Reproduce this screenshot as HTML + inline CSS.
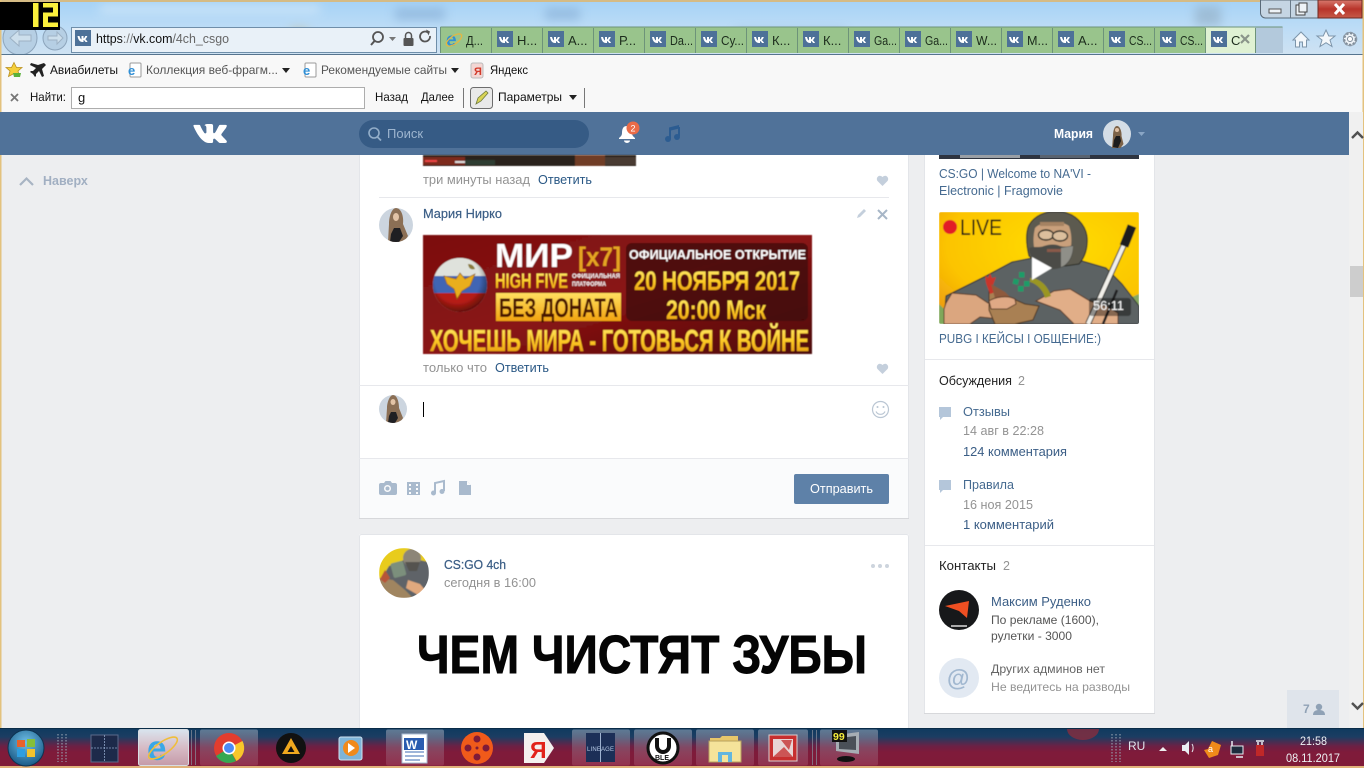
<!DOCTYPE html>
<html lang="ru"><head><meta charset="utf-8"><title>vk.com/4ch_csgo</title>
<style>
html,body{margin:0;padding:0;width:1364px;height:768px;overflow:hidden;background:#edeef0}
svg{display:block;position:absolute;left:0;top:0}
text{font-family:"Liberation Sans","Noto Sans CJK SC",sans-serif;white-space:pre}
.l{fill:#2a5885}.g{fill:#939393}.t{font-size:12.5px}.k{fill:#222}
.tab{font-size:13px;fill:#1c2c1c}
.tb{font-size:12px;fill:#111}
</style></head><body>
<svg width="1364" height="768" viewBox="0 0 1364 768" xmlns="http://www.w3.org/2000/svg">
<defs>
<linearGradient id="sky" x1="0" y1="0" x2="0" y2="1"><stop offset="0" stop-color="#a5d2f6"/><stop offset=".5" stop-color="#bcdcf6"/><stop offset="1" stop-color="#cfe2f2"/></linearGradient>
<linearGradient id="bar" x1="0" y1="0" x2="0" y2="1"><stop offset="0" stop-color="#0f3a5f"/><stop offset=".22" stop-color="#1b3d62"/><stop offset=".45" stop-color="#6a2145"/><stop offset=".6" stop-color="#7f1b3a"/><stop offset="1" stop-color="#7f1b38"/></linearGradient>
<linearGradient id="btn" x1="0" y1="0" x2="0" y2="1"><stop offset="0" stop-color="#7f96ac" stop-opacity=".7"/><stop offset=".5" stop-color="#8f6a80" stop-opacity=".55"/><stop offset="1" stop-color="#a0405c" stop-opacity=".6"/></linearGradient>
<linearGradient id="act" x1="0" y1="0" x2="0" y2="1"><stop offset="0" stop-color="#d8e4ee"/><stop offset=".5" stop-color="#d7bcc6"/><stop offset="1" stop-color="#c59aa8"/></linearGradient>
<linearGradient id="yel" x1="0" y1="0" x2="0" y2="1"><stop offset="0" stop-color="#fff27a"/><stop offset=".55" stop-color="#fdc823"/><stop offset="1" stop-color="#e08a0c"/></linearGradient>
<linearGradient id="ban" x1="0" y1="0" x2="1" y2="1"><stop offset="0" stop-color="#7c1010"/><stop offset=".5" stop-color="#8a1414"/><stop offset="1" stop-color="#4d0808"/></linearGradient>
<linearGradient id="box" x1="0" y1="0" x2="0" y2="1"><stop offset="0" stop-color="#ffe060"/><stop offset="1" stop-color="#f2a310"/></linearGradient>
<radialGradient id="gy" cx=".6" cy=".3" r=".8"><stop offset="0" stop-color="#ffdd00"/><stop offset=".7" stop-color="#fcc400"/><stop offset="1" stop-color="#ee9f10"/></radialGradient>
<linearGradient id="close" x1="0" y1="0" x2="0" y2="1"><stop offset="0" stop-color="#d87a6e"/><stop offset=".5" stop-color="#b8342a"/><stop offset="1" stop-color="#c65a48"/></linearGradient>
<radialGradient id="orb" cx=".5" cy=".35" r=".7"><stop offset="0" stop-color="#6fc0e8"/><stop offset="1" stop-color="#13527f"/></radialGradient>
<radialGradient id="glb" cx=".45" cy=".4" r=".6"><stop offset=".7" stop-color="#000" stop-opacity="0"/><stop offset="1" stop-color="#000" stop-opacity=".45"/></radialGradient>
<filter id="b8"><feGaussianBlur stdDeviation="5"/></filter>
<filter id="b1" x="-2%" y="-2%" width="104%" height="104%"><feGaussianBlur stdDeviation=".45"/></filter>
</defs>

<!-- page background -->
<rect width="1364" height="768" fill="#edeef0"/>

<!-- window chrome -->
<rect width="1364" height="55" fill="url(#sky)"/>
<g filter="url(#b8)" opacity=".55">
<rect x="395" y="8" width="50" height="12" fill="#7fa6cf"/><rect x="545" y="8" width="35" height="12" fill="#7fa6cf"/>
<rect x="290" y="28" width="18" height="14" fill="#c2b58a"/><rect x="1195" y="6" width="26" height="20" fill="#8ea8bd"/>
<rect x="735" y="30" width="110" height="10" fill="#8aa8c8"/><rect x="100" y="5" width="220" height="8" fill="#e4f0fa"/>
</g>
<rect width="1364" height="2" fill="#d5bb85"/>
<rect x="0" y="0" width="1.5" height="728" fill="#e3c27e"/>
<rect x="1362.5" y="0" width="1.5" height="728" fill="#e3c27e"/>

<!-- nav buttons -->
<circle cx="20" cy="38" r="17" fill="#b6cfe4" stroke="#8ca4bb"/>
<path d="M10 38l9-8v5h12v6H19v5z" fill="#cddfec" stroke="#9db2c5"/>
<circle cx="55" cy="38" r="12" fill="#b6cfe4" stroke="#8ca4bb"/>
<path d="M63 38l-6-6v4h-9v4h9v4z" fill="#cddfec" stroke="#9db2c5"/>

<!-- counter -->
<rect x="0" y="2" width="60" height="28" fill="#000"/>
<g fill="#fbf03c">
<rect x="33" y="3" width="5.500" height="24"/>
<rect x="43" y="3" width="15" height="4.500"/><rect x="53" y="3" width="5" height="13"/><rect x="43" y="12.500" width="15" height="4"/><rect x="43" y="12.500" width="5" height="14.500"/><rect x="43" y="22.500" width="15" height="4.500"/>
</g>

<!-- address bar -->
<rect x="71.500" y="27.500" width="365" height="25" fill="#e9f1f8" stroke="#6f8ea9"/>
<rect x="75" y="30" width="16" height="16" fill="#4d7198"/>
<path transform="translate(75.500,30) scale(1)" d="M2 6h2c.5 2 1.200 3 2 3.500V6h2v2.500c.8-.3 1.300-1.200 1.800-2.500h2c-.4 1.500-1.200 2.600-2 3.200.9.6 1.700 1.600 2.300 2.800h-2.100c-.5-1-1.200-1.800-2-2v2H7C4.300 12 2.700 10 2 6z" fill="#fff"/>
<text x="96" y="43" font-size="13" textLength="133" lengthAdjust="spacingAndGlyphs"><tspan fill="#111">https</tspan><tspan fill="#777">://</tspan><tspan fill="#111">vk.com</tspan><tspan fill="#666">/4ch_csgo</tspan></text>
<circle cx="378" cy="37" r="5" fill="none" stroke="#555" stroke-width="1.800"/><path d="M374.500 41l-3.500 4" stroke="#555" stroke-width="2"/>
<path d="M389 37h7l-3.500 4z" fill="#777"/>
<rect x="403.500" y="38" width="10" height="8" rx="1" fill="#555"/><path d="M405.500 38v-2.500a3 3 0 0 1 6 0V38" fill="none" stroke="#555" stroke-width="1.500"/>
<path d="M430 36a5 5 0 1 1-2-3.500" fill="none" stroke="#555" stroke-width="1.800"/><path d="M426 29.500l4 2-1.500 4z" fill="#555"/>

<!-- tabs -->
<rect x="440" y="27" width="815" height="26" fill="#99c48c"/>
<rect x="1205.500" y="27" width="49.500" height="26" fill="#dff1d3"/>
<rect x="1255" y="27" width="28" height="26" fill="#b3c9dc"/>
<path d="M440.500 27h842M440.500 27v26" stroke="#6d9379" fill="none"/>
<g stroke="#6d9379">
<path d="M491.500 28v25M542.500 28v25M593.500 28v25M644.500 28v25M695.500 28v25M746.500 28v25M797.500 28v25M848.500 28v25M899.500 28v25M950.500 28v25M1001.500 28v25M1052.500 28v25M1103.500 28v25M1154.500 28v25M1205.500 28v25M1255.500 28v25"/>
</g>
<!-- first tab IE icon -->
<text x="446" y="46" font-size="19" font-weight="bold" fill="#2f8fd6">e</text>
<ellipse cx="454" cy="40" rx="9" ry="4" fill="none" stroke="#e7b63e" stroke-width="1.200" transform="rotate(-35 454 40)"/>
<text class="tab" x="466" y="45" textLength="17" lengthAdjust="spacingAndGlyphs">Д...</text>
<g fill="#4d7198">
<rect x="497" y="31" width="16" height="16"/><rect x="548" y="31" width="16" height="16"/><rect x="599" y="31" width="16" height="16"/><rect x="650" y="31" width="16" height="16"/><rect x="701" y="31" width="16" height="16"/><rect x="752" y="31" width="16" height="16"/><rect x="803" y="31" width="16" height="16"/><rect x="854" y="31" width="16" height="16"/><rect x="905" y="31" width="16" height="16"/><rect x="956" y="31" width="16" height="16"/><rect x="1007" y="31" width="16" height="16"/><rect x="1058" y="31" width="16" height="16"/><rect x="1109" y="31" width="16" height="16"/><rect x="1160" y="31" width="16" height="16"/><rect x="1211" y="31" width="16" height="16"/>
</g>
<g fill="#fff">
<path transform="translate(497,31)" d="M2 6h2c.5 2 1.200 3 2 3.500V6h2v2.500c.8-.3 1.300-1.200 1.800-2.500h2c-.4 1.500-1.200 2.600-2 3.200.9.6 1.700 1.600 2.300 2.800h-2.100c-.5-1-1.200-1.800-2-2v2H7C4.300 12 2.700 10 2 6z"/>
<path transform="translate(548,31)" d="M2 6h2c.5 2 1.200 3 2 3.500V6h2v2.500c.8-.3 1.300-1.200 1.800-2.500h2c-.4 1.500-1.200 2.600-2 3.200.9.6 1.700 1.600 2.300 2.800h-2.100c-.5-1-1.200-1.800-2-2v2H7C4.300 12 2.700 10 2 6z"/>
<path transform="translate(599,31)" d="M2 6h2c.5 2 1.200 3 2 3.500V6h2v2.500c.8-.3 1.300-1.200 1.800-2.500h2c-.4 1.500-1.200 2.600-2 3.200.9.6 1.700 1.600 2.300 2.800h-2.100c-.5-1-1.200-1.800-2-2v2H7C4.300 12 2.700 10 2 6z"/>
<path transform="translate(650,31)" d="M2 6h2c.5 2 1.200 3 2 3.500V6h2v2.500c.8-.3 1.300-1.200 1.800-2.500h2c-.4 1.500-1.200 2.600-2 3.200.9.6 1.700 1.600 2.300 2.800h-2.100c-.5-1-1.200-1.800-2-2v2H7C4.300 12 2.700 10 2 6z"/>
<path transform="translate(701,31)" d="M2 6h2c.5 2 1.200 3 2 3.500V6h2v2.500c.8-.3 1.300-1.200 1.800-2.500h2c-.4 1.500-1.200 2.600-2 3.200.9.6 1.700 1.600 2.300 2.800h-2.100c-.5-1-1.200-1.800-2-2v2H7C4.300 12 2.700 10 2 6z"/>
<path transform="translate(752,31)" d="M2 6h2c.5 2 1.200 3 2 3.500V6h2v2.500c.8-.3 1.300-1.200 1.800-2.500h2c-.4 1.500-1.200 2.600-2 3.200.9.6 1.700 1.600 2.300 2.800h-2.100c-.5-1-1.200-1.800-2-2v2H7C4.300 12 2.700 10 2 6z"/>
<path transform="translate(803,31)" d="M2 6h2c.5 2 1.200 3 2 3.500V6h2v2.500c.8-.3 1.300-1.200 1.800-2.500h2c-.4 1.500-1.200 2.600-2 3.200.9.6 1.700 1.600 2.300 2.800h-2.100c-.5-1-1.200-1.800-2-2v2H7C4.300 12 2.700 10 2 6z"/>
<path transform="translate(854,31)" d="M2 6h2c.5 2 1.200 3 2 3.500V6h2v2.500c.8-.3 1.300-1.200 1.800-2.500h2c-.4 1.500-1.200 2.600-2 3.200.9.6 1.700 1.600 2.300 2.800h-2.100c-.5-1-1.200-1.800-2-2v2H7C4.300 12 2.700 10 2 6z"/>
<path transform="translate(905,31)" d="M2 6h2c.5 2 1.200 3 2 3.500V6h2v2.500c.8-.3 1.300-1.200 1.800-2.500h2c-.4 1.500-1.200 2.600-2 3.200.9.6 1.700 1.600 2.300 2.800h-2.100c-.5-1-1.200-1.800-2-2v2H7C4.300 12 2.700 10 2 6z"/>
<path transform="translate(956,31)" d="M2 6h2c.5 2 1.200 3 2 3.500V6h2v2.500c.8-.3 1.300-1.200 1.800-2.500h2c-.4 1.500-1.200 2.600-2 3.200.9.6 1.700 1.600 2.300 2.800h-2.100c-.5-1-1.200-1.800-2-2v2H7C4.300 12 2.700 10 2 6z"/>
<path transform="translate(1007,31)" d="M2 6h2c.5 2 1.200 3 2 3.500V6h2v2.500c.8-.3 1.300-1.200 1.800-2.500h2c-.4 1.500-1.200 2.600-2 3.200.9.6 1.700 1.600 2.300 2.800h-2.100c-.5-1-1.200-1.800-2-2v2H7C4.300 12 2.700 10 2 6z"/>
<path transform="translate(1058,31)" d="M2 6h2c.5 2 1.200 3 2 3.500V6h2v2.500c.8-.3 1.300-1.200 1.800-2.500h2c-.4 1.500-1.200 2.600-2 3.200.9.6 1.700 1.600 2.300 2.800h-2.100c-.5-1-1.200-1.800-2-2v2H7C4.300 12 2.700 10 2 6z"/>
<path transform="translate(1109,31)" d="M2 6h2c.5 2 1.200 3 2 3.500V6h2v2.500c.8-.3 1.300-1.200 1.800-2.500h2c-.4 1.500-1.200 2.600-2 3.200.9.6 1.700 1.600 2.300 2.800h-2.100c-.5-1-1.200-1.800-2-2v2H7C4.300 12 2.700 10 2 6z"/>
<path transform="translate(1160,31)" d="M2 6h2c.5 2 1.200 3 2 3.500V6h2v2.500c.8-.3 1.300-1.200 1.800-2.500h2c-.4 1.500-1.200 2.600-2 3.200.9.6 1.700 1.600 2.300 2.800h-2.100c-.5-1-1.200-1.800-2-2v2H7C4.300 12 2.700 10 2 6z"/>
<path transform="translate(1211,31)" d="M2 6h2c.5 2 1.200 3 2 3.500V6h2v2.500c.8-.3 1.300-1.200 1.800-2.500h2c-.4 1.500-1.200 2.600-2 3.200.9.6 1.700 1.600 2.300 2.800h-2.100c-.5-1-1.200-1.800-2-2v2H7C4.300 12 2.700 10 2 6z"/>
</g>
<g class="tab">
<text class="tab" x="517" y="45">Н...</text><text class="tab" x="568" y="45">А...</text><text class="tab" x="619" y="45">Р...</text><text class="tab" x="670" y="45" textLength="23" lengthAdjust="spacingAndGlyphs">Da...</text><text class="tab" x="721" y="45" textLength="23" lengthAdjust="spacingAndGlyphs">Су...</text><text class="tab" x="772" y="45">К...</text><text class="tab" x="823" y="45">К...</text><text class="tab" x="874" y="45" textLength="23" lengthAdjust="spacingAndGlyphs">Ga...</text><text class="tab" x="925" y="45" textLength="23" lengthAdjust="spacingAndGlyphs">Ga...</text><text class="tab" x="976" y="45" textLength="21" lengthAdjust="spacingAndGlyphs">W...</text><text class="tab" x="1027" y="45" textLength="21" lengthAdjust="spacingAndGlyphs">М...</text><text class="tab" x="1078" y="45">А...</text><text class="tab" x="1129" y="45" textLength="23" lengthAdjust="spacingAndGlyphs">CS...</text><text class="tab" x="1180" y="45" textLength="23" lengthAdjust="spacingAndGlyphs">CS...</text><text class="tab" x="1231" y="45">С</text>
</g>
<path d="M1241 35l8 8M1249 35l-8 8" stroke="#8a958a" stroke-width="2.200"/>

<!-- right chrome icons -->
<path d="M1293 40l8-8 8 8h-2.500v7h-4v-5h-3v5h-4v-7z" fill="#f4f8fb" stroke="#7d95aa"/>
<path d="M1326 30l2.800 6h6.200l-5 4 2 6.500-6-3.800-6 3.800 2-6.500-5-4h6.200z" fill="#f4f8fb" stroke="#7d95aa"/>
<circle cx="1350" cy="39" r="6" fill="#eef3f7" stroke="#7d8b98" stroke-width="2.500" stroke-dasharray="2.500 1.500"/><circle cx="1350" cy="39" r="6.500" fill="none" stroke="#8c99a6"/><circle cx="1350" cy="39" r="2.500" fill="#fff" stroke="#7d8b98"/>

<!-- window controls -->
<path d="M1260.500 0v13a5 5 0 0 0 5 5H1318V0z" fill="#c5d5e3" stroke="#5a6a78"/>
<rect x="1318" y="0" width="44" height="18" fill="url(#close)" stroke="#6d2a22"/>
<path d="M1290.500 0v18" stroke="#6a7a88"/>
<rect x="1269" y="9" width="12" height="4" fill="#eef3f7" stroke="#555"/>
<rect x="1296" y="5" width="9" height="10" fill="#eef3f7" stroke="#444"/><rect x="1299" y="3" width="8" height="9" fill="#eef3f7" stroke="#444"/>
<path d="M1335 4l9 10M1344 4l-9 10" stroke="#fff" stroke-width="3"/>

<!-- favorites toolbar -->
<rect x="0" y="54" width="1364" height="58" fill="#f8f8f8"/>
<rect x="0" y="54" width="1364" height="1" fill="#56748e"/>
<rect x="0" y="54" width="1.500" height="58" fill="#e3c27e"/><rect x="1362.500" y="54" width="1.500" height="58" fill="#e3c27e"/>
<path d="M14 62.500l2.500 5h5.500l-4 3.500 1.500 5.500-5.500-3-5.500 3 1.500-5.500-4-3.500h5.500z" fill="#f5cf3c" stroke="#b98f1d" stroke-width=".8"/>
<path d="M13 73h8l-1 4h-6z" fill="#5bb13a"/>
<path d="M44 63l2 2-4 4 2 7-2 1-3-6-3 3v2l-1 1-2-3-3-2 1-1h2l3-3-6-3 1-2 7 2z" fill="#222"/>
<text class="tb" x="50" y="74" textLength="68" lengthAdjust="spacingAndGlyphs">Авиабилеты</text>
<rect x="130" y="63" width="11" height="14" rx="1" fill="#fff" stroke="#9a9a9a"/><text x="128" y="75" font-size="13" font-weight="bold" fill="#2f8fd6">e</text>
<text class="tb" x="146" y="74" fill="#555" style="fill:#555" textLength="132" lengthAdjust="spacingAndGlyphs">Коллекция веб-фрагм...</text>
<path d="M282 68h8l-4 5z" fill="#222"/>
<rect x="305" y="63" width="11" height="14" rx="1" fill="#fff" stroke="#9a9a9a"/><text x="303" y="75" font-size="13" font-weight="bold" fill="#2f8fd6">e</text>
<text class="tb" x="321" y="74" style="fill:#555" textLength="126" lengthAdjust="spacingAndGlyphs">Рекомендуемые сайты</text>
<path d="M451 68h8l-4 5z" fill="#222"/>
<rect x="471" y="63" width="12" height="15" rx="2" fill="#f3d7d4" stroke="#bbb"/><text x="474" y="75" font-size="11" font-weight="bold" fill="#d23a2a">Я</text>
<text class="tb" x="490" y="74" textLength="38" lengthAdjust="spacingAndGlyphs">Яндекс</text>

<!-- find bar -->
<path d="M11 94l7 7M18 94l-7 7" stroke="#777" stroke-width="1.800"/>
<text class="tb" x="30" y="101" textLength="36" lengthAdjust="spacingAndGlyphs">Найти:</text>
<rect x="71.500" y="87.500" width="293" height="21" fill="#fff" stroke="#adadad"/>
<text x="78" y="102" font-size="13" fill="#111">g</text>
<text class="tb" x="375" y="101" textLength="33" lengthAdjust="spacingAndGlyphs">Назад</text>
<text class="tb" x="421" y="101" textLength="33" lengthAdjust="spacingAndGlyphs">Далее</text>
<path d="M463.500 88v20M584.500 88v20" stroke="#777"/>
<rect x="470.500" y="87.500" width="22" height="21" rx="3" fill="#e9e9e9" stroke="#6d6d6d"/>
<path d="M476 104l2-6 8-7 2 2-7 8z" fill="#d9d456" stroke="#6e7a3d" stroke-width=".8"/>
<text class="tb" x="498" y="101" textLength="64" lengthAdjust="spacingAndGlyphs">Параметры</text>
<path d="M569 95h8l-4 5z" fill="#222"/>

<!-- VK header -->
<rect x="0" y="112" width="1349" height="43" fill="#507299"/>
<rect x="1349" y="112" width="14" height="616" fill="#f0f0f0"/>
<path transform="translate(190,113.300) scale(1.650)" fill="#fff" d="M21.547 7h-3.290a.743.743 0 0 0-.655.392s-1.312 2.416-1.734 3.230C14.734 12.813 14 12.126 14 11.110V7.603A1.104 1.104 0 0 0 12.896 6.500h-2.474a1.982 1.982 0 0 0-1.750.813s1.255-.204 1.255 1.490c0 .420.022 1.626.040 2.640a.730.730 0 0 1-1.272.503 21.540 21.540 0 0 1-2.498-4.543.693.693 0 0 0-.630-.403h-2.990a.508.508 0 0 0-.480.685C3.005 10.175 6.918 18 11.380 18h1.878a.742.742 0 0 0 .742-.742v-1.135a.730.730 0 0 1 1.230-.530l2.247 2.112a1.090 1.090 0 0 0 .746.295h2.953c1.424 0 1.424-.988.647-1.753-.546-.538-2.518-2.617-2.518-2.617a1 1 0 0 1-.078-1.323c.637-.840 1.680-2.212 2.122-2.800.603-.804 1.697-2.507.197-2.507z"/>
<rect x="359" y="120" width="230" height="28" rx="14" fill="#365b85"/>
<circle cx="374" cy="133" r="5" fill="none" stroke="#93aec9" stroke-width="1.600"/><path d="M377.500 137l3.500 3.500" stroke="#93aec9" stroke-width="1.800"/>
<text x="387" y="138" font-size="13" fill="#9db5cf">Поиск</text>
<path d="M627 126c-4 0-5 3-5 7 0 3-2 4-3 5v1h16v-1c-1-1-3-2-3-5 0-4-1-7-5-7z" fill="#fff"/><path d="M624 140.500a3 2.500 0 0 0 6 0z" fill="#fff"/>
<circle cx="633" cy="128" r="6.500" fill="#ea6b47"/><text x="630.500" y="131.500" font-size="9" fill="#fff">2</text>
<path d="M669 127.500l10-2.500v3.500l-10 2.500z" fill="#2c5c91"/><path d="M670 129v10M679 127v9" stroke="#2c5c91" stroke-width="2"/><circle cx="668" cy="139" r="3" fill="#2c5c91"/><circle cx="677" cy="137" r="3" fill="#2c5c91"/>
<text x="1054" y="138" font-size="12.500" font-weight="bold" fill="#fff" textLength="39" lengthAdjust="spacingAndGlyphs">Мария</text>
<!-- header avatar -->
<circle cx="1117" cy="134" r="14" fill="#d4dde6"/>
<path d="M1112 148l1-12c0-4 1-10 4-10s5 6 4.500 10l2 8-3 4z" fill="#7c6248"/>
<path d="M1113 147l1-7 2-4 4 0 1 5-3 7z" fill="#1c1c1e"/><circle cx="1117" cy="130" r="2" fill="#e0c0a4"/>
<path d="M1138 132h7l-3.500 4z" fill="#8aa6c5"/>

<!-- left: back to top -->
<path d="M20 185l6.500-6.500 6.500 6.500" fill="none" stroke="#a8b4c3" stroke-width="2.200"/>
<text x="43" y="185" font-size="12.500" font-weight="bold" fill="#a1afc2">Наверх</text>

<!-- main card -->
<rect x="359" y="155" width="550" height="364" fill="#fff"/>
<rect x="359" y="155" width="1" height="364" fill="#e3e5e9"/><rect x="908" y="155" width="1" height="364" fill="#e3e5e9"/>
<!-- previous comment image -->
<g filter="url(#b1)">
<rect x="423" y="155" width="213" height="11" fill="#2b201d"/>
<rect x="423" y="157" width="42" height="8" fill="#7d2a1f"/><rect x="465" y="160" width="30" height="5" fill="#2f3d33"/><rect x="575" y="155" width="30" height="11" fill="#6f3c28"/><rect x="605" y="157" width="31" height="8" fill="#4a3a33"/>
<rect x="425" y="160" width="12" height="2" fill="#e44"/><rect x="455" y="161" width="10" height="2" fill="#ddd"/>
</g>
<text class="t g" x="423" y="184" textLength="107" lengthAdjust="spacingAndGlyphs">три минуты назад</text>
<text class="t l" x="538" y="184" textLength="54" lengthAdjust="spacingAndGlyphs">Ответить</text>
<path d="M882.500 186l-5-5a3 3 0 0 1 5-4 3 3 0 0 1 5 4z" fill="#c4cfdc"/>
<rect x="379" y="197" width="510" height="1" fill="#e7e8ec"/>

<!-- comment: avatar -->
<clipPath id="a1"><circle cx="396" cy="225" r="17"/></clipPath>
<g clip-path="url(#a1)"><rect x="379" y="208" width="34" height="34" fill="#ccd5df"/>
<path d="M388 242l1-18c0-8 3-16 7-16 5 0 8 8 7 16l5 12-4 6z" fill="#8b6f55"/><path d="M390 242l1-8 3-6h6l3 8-4 6z" fill="#1f1f22"/><ellipse cx="396" cy="217" rx="3" ry="4" fill="#e2c3a6"/></g>
<text class="t" x="423" y="218" font-weight="500" fill="#3b5e86" textLength="79" lengthAdjust="spacingAndGlyphs" stroke="#3b5e86" stroke-width=".2">Мария Нирко</text>
<path d="M857 218l1-3 6-6 2 2-6 6z" fill="#c4cfdc"/>
<path d="M878 210l9 9M887 210l-9 9" stroke="#a7b6c7" stroke-width="2"/>

<!-- banner -->
<g filter="url(#b1)">
<rect x="423" y="235" width="389" height="119" fill="url(#ban)"/>
<rect x="626" y="243" width="182" height="78" rx="6" fill="#3e0606" opacity=".75"/>
<circle cx="460" cy="285" r="27" fill="#d5d8d4"/>
<clipPath id="gl"><circle cx="460" cy="285" r="27"/></clipPath>
<g clip-path="url(#gl)"><rect x="433" y="258" width="54" height="18" fill="#dfe2dc"/><rect x="433" y="276" width="54" height="17" fill="#3f65b4"/><rect x="433" y="293" width="54" height="19" fill="#b61c14"/></g>
<path d="M444 276l12 3 4-6 5 6 10-5-5 12-8 5-5 8-3-10-7-5z" fill="#e9ae1c" stroke="#8d5a0c" stroke-width=".7"/>
<path d="M468 264c4 0 6 2 7 5-4 1-6 0-7-5z" fill="#8a7a3a"/>
<circle cx="460" cy="285" r="27" fill="url(#glb)"/>
<text x="495" y="267" font-size="33" font-weight="bold" fill="#fff" textLength="78" lengthAdjust="spacingAndGlyphs">МИР</text>
<text x="578" y="266" font-size="27" font-weight="bold" fill="#e6a520" textLength="43" lengthAdjust="spacingAndGlyphs">[x7]</text>
<text x="629" y="259" font-size="13" font-weight="bold" fill="#fff" textLength="177" lengthAdjust="spacingAndGlyphs">ОФИЦИАЛЬНОЕ ОТКРЫТИЕ</text>
<text x="495" y="288" font-size="21" font-weight="bold" fill="url(#yel)" textLength="73" lengthAdjust="spacingAndGlyphs">HIGH FIVE</text>
<text x="572" y="278" font-size="6" font-weight="bold" fill="#fff" textLength="48" lengthAdjust="spacingAndGlyphs">ОФИЦИАЛЬНАЯ</text>
<text x="572" y="286" font-size="6" font-weight="bold" fill="#fff" textLength="34" lengthAdjust="spacingAndGlyphs">ПЛАТФОРМА</text>
<text x="634" y="290" font-size="27" font-weight="bold" fill="url(#yel)" textLength="166" lengthAdjust="spacingAndGlyphs">20 НОЯБРЯ 2017</text>
<rect x="496" y="293" width="125" height="28" fill="url(#box)"/>
<text x="499" y="317" font-size="27" font-weight="bold" fill="#4a1206" textLength="119" lengthAdjust="spacingAndGlyphs">БЕЗ ДОНАТА</text>
<text x="666" y="319" font-size="27" font-weight="bold" fill="url(#yel)" textLength="100" lengthAdjust="spacingAndGlyphs">20:00 Мск</text>
<text x="430" y="351" font-size="31" font-weight="bold" fill="url(#yel)" stroke="#f6c030" stroke-width=".3" textLength="379" lengthAdjust="spacingAndGlyphs">ХОЧЕШЬ МИРА - ГОТОВЬСЯ К ВОЙНЕ</text>
</g>

<text class="t g" x="423" y="372" textLength="64" lengthAdjust="spacingAndGlyphs">только что</text>
<text class="t l" x="495" y="372" textLength="54" lengthAdjust="spacingAndGlyphs">Ответить</text>
<path d="M882.500 374l-5-5a3 3 0 0 1 5-4 3 3 0 0 1 5 4z" fill="#c4cfdc"/>
<rect x="359" y="385" width="550" height="1" fill="#e7e8ec"/>

<!-- composer -->
<clipPath id="a2"><circle cx="393" cy="409" r="14"/></clipPath>
<g clip-path="url(#a2)"><rect x="379" y="395" width="28" height="28" fill="#ccd5df"/>
<path d="M386 423l1-15c0-6 3-13 6-13 4 0 6 7 6 13l4 10-3 5z" fill="#8b6f55"/><path d="M388 423l1-7 2-4h5l2 6-3 5z" fill="#1f1f22"/><ellipse cx="393" cy="402" rx="2.500" ry="3" fill="#e2c3a6"/></g>
<rect x="423" y="402" width="1" height="15" fill="#000"/>
<circle cx="880.500" cy="409.500" r="8" fill="none" stroke="#bac6d3" stroke-width="1.200"/><circle cx="877.500" cy="407" r="1" fill="#bac6d3"/><circle cx="883.500" cy="407" r="1" fill="#bac6d3"/><path d="M876 411.500a5 5 0 0 0 9 0" fill="none" stroke="#bac6d3" stroke-width="1.200"/>
<rect x="360" y="458" width="548" height="61" fill="#fafbfc"/>
<rect x="359" y="458" width="550" height="1" fill="#e7e8ec"/>
<rect x="359" y="518" width="550" height="1" fill="#d7d8db"/>
<!-- attach icons -->
<path d="M381 483h3l1.500-2h5l1.500 2h3a2 2 0 0 1 2 2v8a2 2 0 0 1-2 2h-14a2 2 0 0 1-2-2v-8a2 2 0 0 1 2-2z" fill="#a9bacd"/><circle cx="387.500" cy="488.500" r="3.500" fill="#fafbfc"/><circle cx="387.500" cy="488.500" r="2" fill="#a9bacd"/>
<rect x="407" y="482" width="13" height="13" fill="#a9bacd"/><g fill="#fafbfc"><rect x="409" y="484" width="2" height="2"/><rect x="409" y="488" width="2" height="2"/><rect x="409" y="492" width="2" height="2"/><rect x="416" y="484" width="2" height="2"/><rect x="416" y="488" width="2" height="2"/><rect x="416" y="492" width="2" height="2"/></g>
<path d="M435 493v-10l9-2v10" fill="none" stroke="#a9bacd" stroke-width="2"/><circle cx="433.500" cy="493" r="2.500" fill="#a9bacd"/><circle cx="442" cy="491.500" r="2.500" fill="#a9bacd"/>
<path d="M459 481h8l4 4v10h-12z" fill="#a9bacd"/><path d="M467 481v4h4z" fill="#fafbfc"/>
<rect x="794" y="474" width="95" height="30" rx="2" fill="#5e81a8"/>
<text x="810" y="493" font-size="12.500" fill="#fff" textLength="63" lengthAdjust="spacingAndGlyphs">Отправить</text>

<!-- second card -->
<rect x="359" y="534" width="550" height="194" rx="2" fill="#fff"/>
<rect x="359.500" y="534.500" width="549" height="200" rx="2" fill="none" stroke="#e3e5e9"/>
<clipPath id="a3"><circle cx="404" cy="573" r="25"/></clipPath>
<g clip-path="url(#a3)" filter="url(#b1)"><rect x="379" y="548" width="50" height="50" fill="#e8cc1c"/>
<path d="M379 583l10-17 20-8 20 4v36h-50z" fill="#5f6468"/>
<circle cx="412" cy="558" r="9" fill="#8d8678"/><path d="M405 562h15l-3 9h-8z" fill="#55534f"/>
<path d="M379 578l14 2 12 10 8 8h-34z" fill="#a08560"/><path d="M385 570l5 8-5 5-5-4z" fill="#b65538"/>
<rect x="392" y="562" width="13" height="15" rx="2" fill="#7b8f7b" transform="rotate(-15 398 570)"/>
<path d="M408 580l12 4 6 7-8 4-12-7z" fill="#e1a97e"/></g>
<text class="t" x="444" y="569" fill="#3b5e86" stroke="#3b5e86" stroke-width=".25" textLength="62" lengthAdjust="spacingAndGlyphs">CS:GO 4ch</text>
<text class="t g" x="444" y="587" textLength="92" lengthAdjust="spacingAndGlyphs">сегодня в 16:00</text>
<circle cx="873" cy="566" r="2" fill="#cdd4dd"/><circle cx="880" cy="566" r="2" fill="#cdd4dd"/><circle cx="887" cy="566" r="2" fill="#cdd4dd"/>
<text x="417" y="673" font-size="54" font-weight="bold" fill="#050505" stroke="#050505" stroke-width="1" textLength="450" lengthAdjust="spacingAndGlyphs">ЧЕМ ЧИСТЯТ ЗУБЫ</text>

<!-- sidebar -->
<rect x="924" y="155" width="230" height="558" fill="#fff"/>
<rect x="924" y="155" width="1" height="558" fill="#e3e5e9"/><rect x="1154" y="155" width="1" height="558" fill="#e3e5e9"/><rect x="924" y="713" width="231" height="1" fill="#d7d8db"/>
<rect x="939" y="155" width="200" height="4" fill="#2e3440"/><rect x="960" y="155" width="60" height="3" fill="#9a9fa5"/><rect x="1040" y="155" width="50" height="3" fill="#596370"/>
<text class="t l" x="939" y="178" style="fill:#456a90" textLength="152" lengthAdjust="spacingAndGlyphs">CS:GO | Welcome to NA'VI -</text>
<text class="t l" x="939" y="195" style="fill:#456a90" textLength="124" lengthAdjust="spacingAndGlyphs">Electronic | Fragmovie</text>

<!-- thumbnail -->
<clipPath id="th"><rect x="939" y="212" width="200" height="112" rx="2"/></clipPath>
<g clip-path="url(#th)" filter="url(#b1)">
<rect x="939" y="212" width="200" height="112" fill="url(#gy)"/>
<!-- greenery -->
<path d="M939 304l6 6 4 14h-10z" fill="#7fa85a"/>
<path d="M1125 300l14-6v30h-14z" fill="#86a85e"/>
<!-- shirt -->
<path d="M946 296l20-10 20-10 26-14 20-4h40l34 10 16 16 17 22v18H944z" fill="#5c6263" stroke="#2b2f2e"/>
<!-- hair -->
<path d="M1027 232c1-10 10-18 22-20h14c12 2 22 12 24 24 1 10-1 20-8 28l-14 2h-24l-12-10c-2-8-3-16-2-24z" fill="#5b5a50" stroke="#2b2b24"/>
<!-- face -->
<path d="M1035 228c6-7 26-8 34-2 3 8 3 18 1 26l-4 10h-26l-5-10c-2-8-2-16 0-24z" fill="#c9a07c"/>
<path d="M1040 222l24 0v4h-24z" fill="#a58262"/>
<!-- beard -->
<path d="M1029 248c6-2 10 0 15-2 6-2 12-2 16 0 4 1 8 1 13-1 1 8-2 18-10 22-6 2-14 4-20 0-8-4-14-12-14-19z" fill="#4c4c46"/>
<path d="M1061 248l12-2c0 9-4 18-12 21z" fill="#8f8f88"/>
<path d="M1047 249h14v3h-14z" fill="#8a5a48"/>
<!-- glasses -->
<ellipse cx="1046" cy="235" rx="7.500" ry="5" fill="#dcbf9d" stroke="#2b2b24" stroke-width="1.400"/><ellipse cx="1060" cy="236" rx="7.500" ry="5" fill="#dcbf9d" stroke="#2b2b24" stroke-width="1.400"/>
<!-- left arm -->
<path d="M944 309l2-6 6-10 24 2 12 8 30 0 2 8-20 8-20-2-10 7h-26z" fill="#dba67f" stroke="#5a3b26"/>
<!-- chicken -->
<path d="M989 288c6 0 14 4 22 10l14 6 14 2-6 14-18 4h-20l-6-14z" fill="#a98052" stroke="#4d3520"/>
<path d="M986 283l-1-8 3 3 2-5 2 5 4-1-3 8 5 6-8 3z" fill="#c9352a"/>
<path d="M991 284l14 8 6 6-16 0z" fill="#8e5a3c"/>
<path d="M989 301c6-4 18-6 26-2l1 5-9 5-16 0z" fill="#dfa985" stroke="#5a3b26"/>
<!-- right hand -->
<path d="M1036 301l18-10 16-2 20 12 18 6 10 6 0 11h-44l-14-14z" fill="#e1ae88" stroke="#5a3b26"/>
<!-- green buttons -->
<g fill="#1f9c68"><rect x="1013" y="279" width="5.500" height="5.500" transform="rotate(15 1016 282)"/><rect x="1019" y="272" width="5.500" height="5.500"/><rect x="1018" y="286" width="5.500" height="5.500"/><rect x="1024" y="281" width="5.500" height="5.500"/></g>
<path d="M1030 278c10 0 18 8 21 18l-6 2c-2-8-8-14-15-16z" fill="#9a9622"/>
<!-- rod -->
<path d="M1128 236l-40 88" stroke="#2d2d2a" stroke-width="6"/><path d="M1128 236l-40 88" stroke="#f2f0ea" stroke-width="4"/>
<path d="M1132 226l-8 20" stroke="#1f1f1f" stroke-width="9"/>
<path d="M1117 290l-14 34" stroke="#222" stroke-width="2.500"/>
<path d="M1032 257l20 11-20 12z" fill="#fff"/>
<circle cx="950" cy="227" r="7" fill="#e21f26"/>
<text x="960" y="235" font-size="22" fill="#111" textLength="42" lengthAdjust="spacingAndGlyphs">LIVE</text>
<rect x="1089" y="298" width="42" height="18" rx="3" fill="#000" opacity=".4"/>
<text x="1093" y="310" font-size="12.500" fill="#fff" textLength="31" lengthAdjust="spacingAndGlyphs">56:11</text>
</g>
<text class="t" x="939" y="343" fill="#456a90" textLength="162" lengthAdjust="spacingAndGlyphs">PUBG I КЕЙСЫ I ОБЩЕНИЕ:)</text>
<rect x="925" y="359" width="229" height="1" fill="#e7e8ec"/>

<text class="t k" x="939" y="385" textLength="73" lengthAdjust="spacingAndGlyphs">Обсуждения</text>
<text class="t g" x="1018" y="385">2</text>
<path d="M939 407h12v10h-8l-3 3v-3h-1z" fill="#b4c6da"/>
<text class="t" x="963" y="416" fill="#456a90" textLength="47" lengthAdjust="spacingAndGlyphs">Отзывы</text>
<text class="t g" x="963" y="435" textLength="81" lengthAdjust="spacingAndGlyphs">14 авг в 22:28</text>
<text class="t l" x="963" y="456" style="fill:#3b5e86" textLength="104" lengthAdjust="spacingAndGlyphs">124 комментария</text>
<path d="M939 480h12v10h-8l-3 3v-3h-1z" fill="#b4c6da"/>
<text class="t" x="963" y="489" fill="#456a90" textLength="51" lengthAdjust="spacingAndGlyphs">Правила</text>
<text class="t g" x="963" y="509" textLength="70" lengthAdjust="spacingAndGlyphs">16 ноя 2015</text>
<text class="t" x="963" y="529" fill="#3b5e86" textLength="91" lengthAdjust="spacingAndGlyphs">1 комментарий</text>
<rect x="925" y="545" width="229" height="1" fill="#e7e8ec"/>

<text class="t k" x="939" y="570" textLength="57" lengthAdjust="spacingAndGlyphs">Контакты</text>
<text class="t g" x="1003" y="570">2</text>
<circle cx="959" cy="610" r="20" fill="#17181a"/>
<path d="M945 606l24-5-2 17-8-7z" fill="#ee4f22"/>
<rect x="951" y="625" width="16" height="2" fill="#aaa"/>
<text class="t" x="991" y="606" fill="#3b5e86" textLength="100" lengthAdjust="spacingAndGlyphs">Максим Руденко</text>
<text x="991" y="624" font-size="12" fill="#555" textLength="108" lengthAdjust="spacingAndGlyphs">По рекламе (1600),</text>
<text x="991" y="640" font-size="12" fill="#555" textLength="81" lengthAdjust="spacingAndGlyphs">рулетки - 3000</text>
<circle cx="959" cy="678" r="20" fill="#e2e9f2"/>
<text x="947" y="686" font-size="23" fill="#a2b8d0" font-weight="bold">@</text>
<text x="991" y="673" font-size="12" fill="#656565" textLength="114" lengthAdjust="spacingAndGlyphs">Других админов нет</text>
<text x="991" y="691" font-size="12" fill="#939393" textLength="139" lengthAdjust="spacingAndGlyphs">Не ведитесь на разводы</text>

<!-- people box -->
<rect x="1287" y="690" width="52" height="38" fill="#dfe4eb"/>
<text x="1303" y="713" font-size="12" font-weight="bold" fill="#8fa1b5">7</text>
<circle cx="1319" cy="707" r="3.200" fill="#8fa1b5"/><path d="M1313 715c0-4 3-5 6-5s6 1 6 5z" fill="#8fa1b5"/>

<!-- scrollbar -->
<rect x="1350" y="266" width="13" height="31" fill="#cdcdcd"/>
<path d="M1352 138l5.500-5.500 5.500 5.500" fill="none" stroke="#505050" stroke-width="2.400"/>
<path d="M1352 703l5.500 5.500 5.500-5.500" fill="none" stroke="#505050" stroke-width="2.400"/>

<!-- taskbar -->
<rect x="0" y="728" width="1364" height="40" fill="url(#bar)"/>
<rect x="0" y="728" width="1364" height="1" fill="#0a2c48"/>
<rect x="0" y="766" width="1364" height="2" fill="#e0b27a"/>
<path d="M1067 729h32a16 11 0 0 1-32 0z" fill="#8f2c3c" opacity=".75"/>
<!-- buttons -->
<rect x="138.500" y="729.500" width="50" height="36" rx="2" fill="url(#act)" stroke="#d7dde3"/>
<rect x="200" y="729.500" width="58" height="36" rx="2" fill="url(#btn)"/>
<rect x="386" y="729.500" width="58" height="36" rx="2" fill="url(#btn)"/>
<rect x="572" y="729.500" width="58" height="36" rx="2" fill="url(#btn)"/>
<rect x="634" y="729.500" width="58" height="36" rx="2" fill="url(#btn)"/>
<rect x="696" y="729.500" width="58" height="36" rx="2" fill="url(#btn)"/>
<rect x="758" y="729.500" width="50" height="36" rx="2" fill="url(#btn)"/>
<rect x="820" y="729.500" width="58" height="36" rx="2" fill="url(#btn)"/>
<path d="M191.500 730v35M195.500 730v35M812.500 730v35M816.500 730v35" stroke="#8a8f9c" opacity=".7"/>
<!-- grips -->
<g stroke="#9aa7b5" stroke-width="1.500" stroke-dasharray="1.500 1.500" opacity=".7"><path d="M58 734v28M62 734v28M66 734v28M1112 734v28M1116 734v28M1120 734v28"/></g>
<!-- start -->
<circle cx="26" cy="748" r="18" fill="url(#orb)" stroke="#0c3350"/>
<rect x="17" y="740" width="8" height="7" fill="#e8622c"/><rect x="27" y="739" width="8" height="8" fill="#85bf3a"/><rect x="17" y="749" width="8" height="8" fill="#2f9ee0"/><rect x="27" y="749" width="8" height="8" fill="#f3c32c"/>
<!-- app 1 -->
<rect x="91" y="735" width="27" height="27" fill="#1d2a4a" stroke="#5a6a8a"/><path d="M104.500 735v27M91 748h27" stroke="#8da3c5" stroke-width=".8" stroke-dasharray="2 1"/>
<!-- IE -->
<text x="147" y="760" font-size="35" font-weight="bold" fill="#3aa7e6">e</text>
<ellipse cx="163" cy="748" rx="17" ry="6" fill="none" stroke="#efbe3a" stroke-width="1.600" transform="rotate(-35 163 748)"/>
<!-- Chrome -->
<circle cx="229" cy="748" r="15" fill="#e23d2e"/><path d="M229 748l-13 8a15 15 0 0 0 20 5z" fill="#35a852"/><path d="M229 748l7.500 13a15 15 0 0 0 6-20z" fill="#f8c72a"/><circle cx="229" cy="748" r="6.500" fill="#fff"/><circle cx="229" cy="748" r="5" fill="#4c8bf5"/>
<!-- AIMP -->
<circle cx="291" cy="748" r="15" fill="#111"/><path d="M291 738l9 16h-18z" fill="#f0a81e"/><path d="M291 746l3.500 6h-7z" fill="#111"/>
<!-- WMP -->
<rect x="339" y="737" width="23" height="23" rx="2" fill="#7fb4d8" stroke="#cfe2f0"/><circle cx="351" cy="748" r="8" fill="#f08a1c"/><path d="M348 743l7 5-7 5z" fill="#fff"/>
<!-- Word -->
<rect x="402" y="734" width="25" height="29" fill="#fff" stroke="#a9bcd4"/><path d="M405 752h19M405 756h19M405 760h15" stroke="#3d6bb3"/><rect x="404" y="738" width="20" height="12" fill="#2a5cb0"/><text x="406" y="749" font-size="12" font-weight="bold" fill="#fff">W</text>
<!-- film -->
<circle cx="477" cy="748" r="16" fill="#f05a1a"/><g fill="#7f1b38"><circle cx="477" cy="739" r="3.500"/><circle cx="477" cy="757" r="3.500"/><circle cx="468" cy="748" r="3.500"/><circle cx="486" cy="748" r="3.500"/><circle cx="477" cy="748" r="1.500"/></g>
<!-- Yandex -->
<path d="M524 733h20l10 15-10 15h-20z" fill="#f4f0ee"/><text x="530" y="758" font-size="23" font-weight="bold" fill="#e2231a">Я</text>
<!-- Lineage -->
<rect x="586" y="733" width="29" height="29" fill="#1c2f57"/><text x="587" y="751" font-size="6" fill="#b9cbe6" textLength="27">LINEAGE</text><path d="M600.500 733v29" stroke="#9eb2d0"/>
<!-- BLE -->
<circle cx="663" cy="748" r="15" fill="#fff" stroke="#111" stroke-width="3"/><path d="M655 738v8a8 8 0 0 0 16 0v-8h-4v8a4 4 0 0 1-8 0v-8z" fill="#111"/><text x="655" y="760" font-size="7" font-weight="bold" fill="#111">BLE</text>
<!-- folder -->
<path d="M710 738h10l2-2h16v6h-28z" fill="#e8c76a"/><rect x="709" y="741" width="32" height="21" fill="#f5e39a" stroke="#b7a15f"/><rect x="718" y="752" width="14" height="10" fill="#62b6de"/><rect x="722" y="755" width="6" height="7" fill="#f5e39a"/>
<!-- red app -->
<rect x="769" y="735" width="28" height="26" fill="#c72f2f" stroke="#d9d0d0"/><rect x="773" y="739" width="20" height="18" fill="#e8d4d4"/><path d="M773 757l11-10 9 10zM781 740l8 10 3-10z" fill="#c55"/>
<!-- monitor -->
<path d="M836 735l23-3v22l-23-3z" fill="#a7aeb4"/><path d="M839 738l17-2v14l-17-1z" fill="#4a5058"/><ellipse cx="846" cy="759" rx="9" ry="3" fill="#111"/>
<rect x="832" y="730" width="15" height="12" fill="#111"/><text x="833" y="740" font-size="10.500" font-weight="bold" fill="#f7ef3c">99</text>
<!-- tray -->
<text x="1128" y="750" font-size="12" fill="#dfe5ec">RU</text>
<path d="M1159 751h8l-4-4z" fill="#eee"/>
<path d="M1182 745h3l4-4v14l-4-4h-3z" fill="#e9eef3"/><path d="M1192 744c1.500 2 1.500 6 0 8" stroke="#e9eef3" fill="none"/>
<path d="M1212 741l9 4-3 10-9 3-5-8 4-1z" fill="#f08a1a"/><text x="1208" y="752" font-size="9" fill="#fff">a</text>
<rect x="1231" y="746" width="12" height="8" fill="#1d2c3d" stroke="#e9eef3"/><path d="M1232 741v5M1236 757h7" stroke="#e9eef3" stroke-width="1.500"/>
<rect x="1256" y="745" width="8" height="11" fill="#c02828"/><path d="M1258 742v3M1262 742v3M1256 741h8" stroke="#e9eef3" stroke-width="1.500"/>
<text x="1300" y="745" font-size="12" fill="#eef2f5" textLength="27" lengthAdjust="spacingAndGlyphs">21:58</text>
<text x="1286" y="762" font-size="12" fill="#eef2f5" textLength="54" lengthAdjust="spacingAndGlyphs">08.11.2017</text>
</svg>
</body></html>
